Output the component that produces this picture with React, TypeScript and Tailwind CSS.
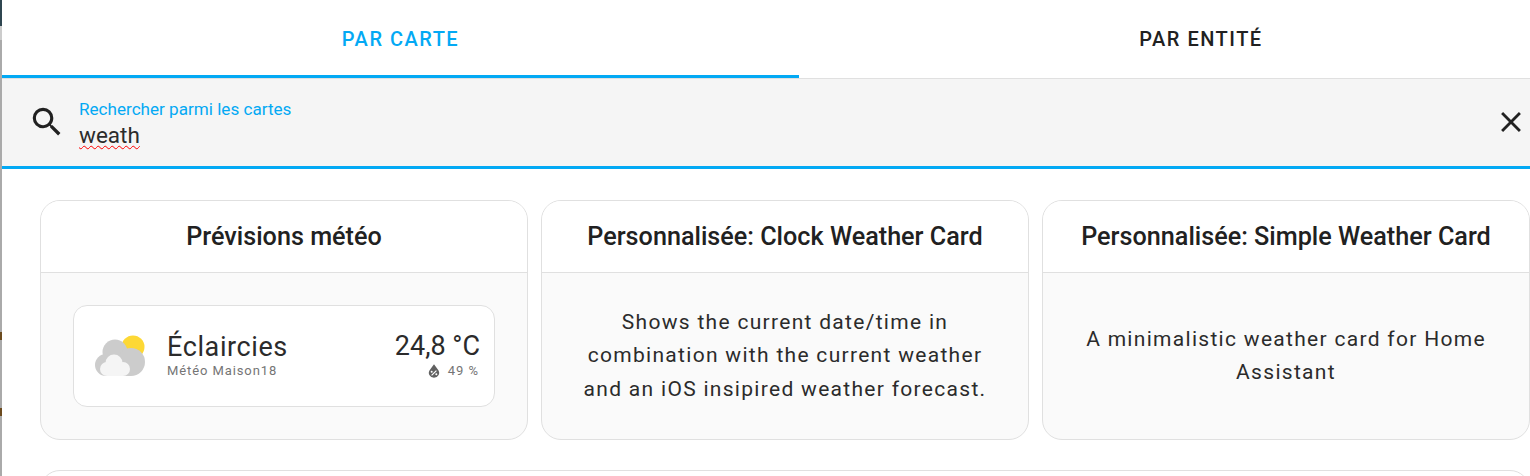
const font = "font-['Roboto',sans-serif]";

function WeatherIcon() {
  return (
    <svg width="52" height="42" viewBox="95 327 52 42" className="shrink-0">
      <circle cx="133" cy="339" r="11.500" fill="#fdd835" />
      <g fill="#cccccc">
        <circle cx="106" cy="357" r="11" />
        <circle cx="115" cy="344" r="12.500" />
        <circle cx="131" cy="354" r="14" />
        <rect x="106" y="350" width="25" height="18" />
      </g>
      <g fill="#f5f5f5">
        <circle cx="107" cy="361" r="7" />
        <circle cx="114" cy="355" r="8.500" />
        <circle cx="123" cy="361" r="7" />
        <rect x="107" y="360" width="16" height="8" />
      </g>
    </svg>
  );
}

function Card({ title, children }: { title: string; children: React.ReactNode }) {
  return (
    <div className="flex h-[240px] flex-col overflow-hidden rounded-[20px] border border-[#e0e0e0] bg-[#fafafa]">
      <div className="flex h-[72px] shrink-0 items-center justify-center border-b border-[#e0e0e0] bg-white text-[25.200px] font-medium text-[#212121]">
        {title}
      </div>
      <div className="flex flex-1 items-center justify-center px-8 text-center text-[21px] leading-[33.500px] tracking-[1.300px] text-[#2b2b2b]">
        {children}
      </div>
    </div>
  );
}

export default function App() {
  return (
    <div className={`${font} flex h-[476px] overflow-hidden bg-white`}>
      <div className="flex w-[2px] shrink-0 flex-col">
        <div className="h-[26px] bg-[#2f4650]" />
        <div className="h-[14px] bg-[#cccccc]" />
        <div className="h-[292px] bg-[#aaaaaa]" />
        <div className="h-[8px] bg-[#6b4a1e]" />
        <div className="h-[68px] bg-[#aaaaaa]" />
        <div className="h-[8px] bg-[#6b4a1e]" />
        <div className="flex-1 bg-[#aaaaaa]" />
      </div>

      <div className="w-[1528px] shrink-0">
        <div className="flex h-[79px] overflow-hidden border-b border-[#e0e0e0]">
          <div className="flex w-[797px] shrink-0 items-center justify-center border-b-[3px] border-[#03a9f4] pt-[2px] text-[20px] font-medium tracking-[1.500px] text-[#03a9f4]">
            PAR CARTE
          </div>
          <div className="flex w-[804px] shrink-0 items-center justify-center border-b-[3px] border-transparent pt-[2px] text-[20px] font-medium tracking-[1.500px] text-[#212121]">
            PAR ENTITÉ
          </div>
        </div>

        <div className="flex h-[90px] items-center border-b-[3px] border-[#03a9f4] bg-[#f5f5f5] pb-[1px] pl-[26px] pr-[2px]">
          <svg width="38" height="38" viewBox="0 0 24 24" fill="#212121" className="shrink-0">
            <path d="M9.500 3A6.500 6.500 0 0 1 16 9.500c0 1.610-.59 3.090-1.560 4.230l.27.27h.79l5 5-1.500 1.500-5-5v-.79l-.27-.27A6.516 6.516 0 0 1 9.500 16 6.500 6.500 0 0 1 3 9.500 6.500 6.500 0 0 1 9.500 3m0 2C7 5 5 7 5 9.500S7 14 9.500 14 14 12 14 9.500 12 5 9.500 5z" />
          </svg>
          <div className="ml-[13px] flex-1 pt-[6px]">
            <div className="text-[17.100px] leading-[20px] text-[#03a9f4]">Rechercher parmi les cartes</div>
            <div className="text-[22.500px] leading-[32px] text-[#2b2b2b] underline decoration-wavy decoration-[#ff0000] decoration-1 underline-offset-2">
              weath
            </div>
          </div>
          <svg width="34" height="34" viewBox="0 0 24 24" fill="#212121" className="shrink-0">
            <path d="M19 6.410 17.590 5 12 10.590 6.410 5 5 6.410 10.590 12 5 17.590 6.410 19 12 13.410 17.590 19 19 17.590 13.410 12z" />
          </svg>
        </div>

        <div className="grid grid-cols-3 gap-[13px] pl-[38px] pt-[31px]">
          <Card title="Prévisions météo">
            <div className="flex h-[102px] w-full items-center rounded-[14px] border border-[#e0e0e0] bg-white pl-[21px] pr-[14px] tracking-normal">
              <WeatherIcon />
              <div className="ml-[20px] flex-1 pb-[4px] text-left">
                <div className="text-[27px] leading-[34px] tracking-[0.600px] text-[#2b2b2b]">Éclaircies</div>
                <div className="text-[13px] leading-[14px] tracking-[0.900px] text-[#757575]">Météo Maison18</div>
              </div>
              <div className="pb-[4px] text-right">
                <div className="text-[27px] leading-[34px] text-[#2b2b2b]">24,8 °C</div>
                <div className="flex items-center justify-end gap-[6px] pr-[1px] text-[13px] leading-[16px] tracking-[1px] text-[#757575]">
                  <svg width="16" height="16" viewBox="0 0 24 24" fill="#616161">
                    <path d="M12 2 6.500 9.500C4 13 3.500 15 5 18a8 8 0 0 0 14 0c1.500-3 1-5-1.500-8.500zM8.500 11.500a1.500 1.500 0 1 1 0 3 1.500 1.500 0 0 1 0-3zm7 4a1.500 1.500 0 1 1 0 3 1.500 1.500 0 0 1 0-3zM15 11l1.200 1L9 19l-1.200-1z" />
                  </svg>
                  49 %
                </div>
              </div>
            </div>
          </Card>
          <Card title="Personnalisée: Clock Weather Card">
            Shows the current date/time in combination with the current weather and an iOS insipired weather forecast.
          </Card>
          <Card title="Personnalisée: Simple Weather Card">
            A minimalistic weather card for Home Assistant
          </Card>
        </div>

        <div className="ml-[38px] mt-[30px] h-[40px] rounded-t-[20px] border border-[#e0e0e0] bg-white" />
      </div>
    </div>
  );
}
